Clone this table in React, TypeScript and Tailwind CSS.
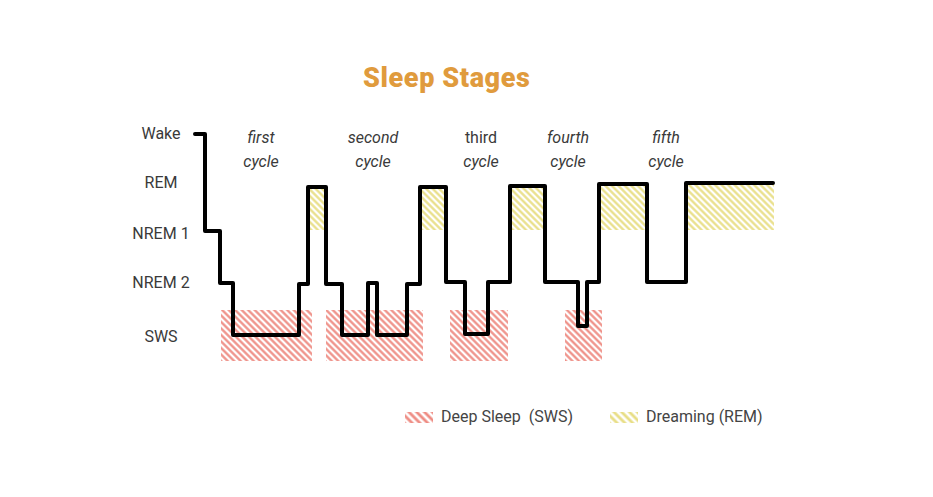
const FONT = "font-['Roboto','Liberation_Sans',sans-serif]";

// hypnogram step line, page coordinates
const HYPNO =
  "M195 134 H205 V231 H220 V283 H233 V335 H299 V284 H308 V187 H326 V284 H342 V335 H368 V283 H377 V335 H407 V284 H420 V187 H446 V282 H465 V334 H488 V282 H510 V186 H545 V282 H578 V326 H587 V282 H599 V184 H647 V282 H686 V183 H773";

const deep = [
  [221, 312],
  [326, 423],
  [450, 508],
  [565, 602],
];

const rem = [
  [308, 326, 187],
  [420, 446, 187],
  [510, 545, 186],
  [599, 647, 184],
  [686, 774, 183],
];

const stages = [
  { label: "Wake", y: 133 },
  { label: "REM", y: 182 },
  { label: "NREM 1", y: 233 },
  { label: "NREM 2", y: 282 },
  { label: "SWS", y: 336 },
];

const cycles = [
  { first: "first", x: 261, upright: false },
  { first: "second", x: 373, upright: false },
  { first: "third", x: 481, upright: true },
  { first: "fourth", x: 568, upright: false },
  { first: "fifth", x: 666, upright: false },
];

const Hatch = ({ id, color, gap = 4.6, width = 2.2 }: { id: string; color: string; gap?: number; width?: number }) => (
  <pattern id={id} patternUnits="userSpaceOnUse" width={gap} height={gap} patternTransform="rotate(-45)">
    <rect width={gap} height={gap} fill="#fff" />
    <line x1={gap / 2} y1="0" x2={gap / 2} y2={gap} stroke={color} strokeWidth={width} />
  </pattern>
);

const Swatch = ({ id, color }: { id: string; color: string }) => (
  <svg width="28" height="11" className="shrink-0">
    <defs>
      <Hatch id={id} color={color} gap={5.5} width={2.8} />
    </defs>
    <rect width="28" height="11" fill={`url(#${id})`} />
  </svg>
);

const App = () => {
  return (
    <div className={`w-[933px] h-[497px] bg-white flex flex-col ${FONT}`}>
      <h1 className="ml-[363px] mt-[62px] text-[27px] leading-[32px] font-black tracking-[0.6px] text-[#e09b3d]">
        Sleep Stages
      </h1>

      <svg className="ml-[120px] mt-[24px]" width="670" height="250" viewBox="120 118 670 250">
        <defs>
          <Hatch id="deep" color="#ee8c83" />
          <Hatch id="rem" color="#e8de85" />
        </defs>

        {deep.map(([a, b]) => (
          <rect key={a} x={a} y={310} width={b - a} height={51} fill="url(#deep)" />
        ))}
        {rem.map(([a, b, top]) => (
          <rect key={a} x={a} y={top} width={b - a} height={230 - top} fill="url(#rem)" />
        ))}

        {stages.map((s) => (
          <text
            key={s.label}
            x={161}
            y={s.y}
            textAnchor="middle"
            dominantBaseline="central"
            fontSize="16"
            fill="#3a3a3a"
          >
            {s.label}
          </text>
        ))}

        {cycles.map((c) => (
          <g key={c.first} fontSize="16" fill="#3a3a3a" textAnchor="middle">
            <text x={c.x} y={143} fontStyle={c.upright ? "normal" : "italic"}>
              {c.first}
            </text>
            <text x={c.x} y={167} fontStyle="italic">
              cycle
            </text>
          </g>
        ))}

        <path d={HYPNO} fill="none" stroke="#000" strokeWidth="4" strokeLinejoin="round" strokeLinecap="round" />
      </svg>

      <div className="ml-[405px] mt-[39px] flex items-center text-[16px] leading-[20px] text-[#444]">
        <div className="flex items-center gap-2">
          <Swatch id="sw-deep" color="#ee8c83" />
          <span className="whitespace-pre">Deep Sleep  (SWS)</span>
        </div>
        <div className="ml-[37px] flex items-center gap-2">
          <Swatch id="sw-rem" color="#e8de85" />
          <span>Dreaming (REM)</span>
        </div>
      </div>
    </div>
  );
};

export default App;
